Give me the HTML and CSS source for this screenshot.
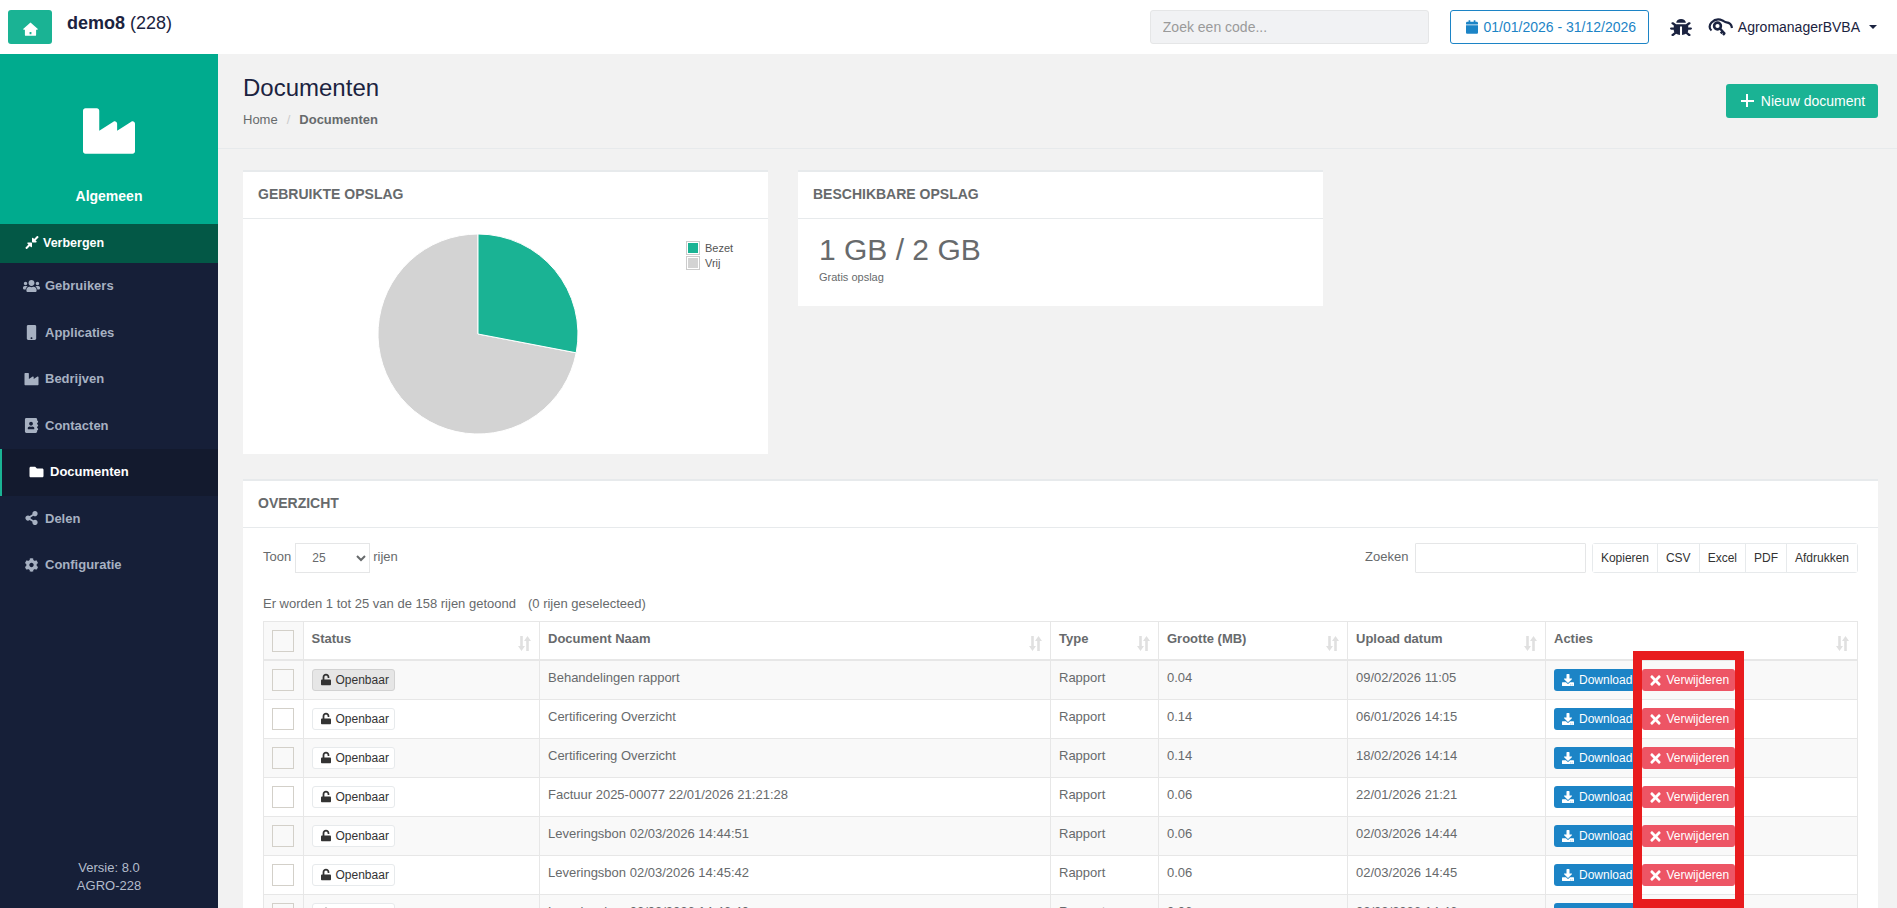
FILE: index.html
```html
<!DOCTYPE html>
<html lang="nl">

<head>
  <meta charset="UTF-8" />
  <meta name="viewport" content="width=device-width, initial-scale=1.0" />
  <title>Documenten</title>
  <link rel="stylesheet" href="styles.css">
</head>

<body>
  <!-- icon set -->
  <svg class="sprite" aria-hidden="true">
    <symbol id="i-industry" viewBox="0 0 512 512"><path d="M475.115 163.781L336 252.309v-68.28c0-18.916-20.931-30.399-36.885-20.248L160 252.309V56c0-13.255-10.745-24-24-24H24C10.745 32 0 42.745 0 56v400c0 13.255 10.745 24 24 24h464c13.255 0 24-10.745 24-24V184.029c0-18.917-20.931-30.399-36.885-20.248z"/></symbol>
    <symbol id="i-home" viewBox="0 0 16 15"><path d="M8 0.500L15.600 7.300C16 7.700 15.800 8.200 15.300 8.200H14V13.800C14 14.400 13.600 14.800 13 14.800H3C2.400 14.800 2 14.400 2 13.800V8.200H0.700C0.200 8.200 0 7.700 0.400 7.300ZM7 10.800V13H9V10.800Z" fill-rule="evenodd"/></symbol>
    <symbol id="i-compress" viewBox="0 0 448 512"><path d="M4.686 427.314L104 328l-32.922-31.029C55.958 281.851 66.666 256 88.048 256h112C213.303 256 224 266.745 224 280v112c0 21.382-25.803 32.09-40.922 16.971L152 376l-99.314 99.314c-6.248 6.248-16.379 6.248-22.627 0L4.686 449.941c-6.248-6.248-6.248-16.379 0-22.627zM443.314 84.686L344 184l32.922 31.029c15.12 15.12 4.412 40.971-16.97 40.971h-112C234.697 256 224 245.255 224 232V120c0-21.382 25.803-32.09 40.922-16.971L296 136l99.314-99.314c6.248-6.248 16.379-6.248 22.627 0l25.373 25.373c6.248 6.248 6.248 16.379 0 22.627z"/></symbol>
    <symbol id="i-users" viewBox="0 0 640 512"><path d="M96 224c35.3 0 64-28.7 64-64s-28.7-64-64-64-64 28.7-64 64 28.7 64 64 64zm448 0c35.3 0 64-28.7 64-64s-28.7-64-64-64-64 28.7-64 64 28.7 64 64 64zm32 32h-64c-17.6 0-33.5 7.1-45.1 18.6 40.3 22.1 68.9 62 75.1 109.4h66c17.7 0 32-14.3 32-32v-32c0-35.3-28.7-64-64-64zm-256 0c61.9 0 112-50.1 112-112S381.9 32 320 32 208 82.1 208 144s50.1 112 112 112zm76.8 32h-8.3c-20.8 10-43.9 16-68.5 16s-47.6-6-68.5-16h-8.3C179.6 288 128 339.6 128 403.2V432c0 26.5 21.5 48 48 48h288c26.5 0 48-21.5 48-48v-28.8c0-63.6-51.6-115.2-115.2-115.2zm-223.7-13.4C161.5 263.1 145.6 256 128 256H64c-35.3 0-64 28.7-64 64v32c0 17.7 14.3 32 32 32h65.9c6.3-47.4 34.9-87.3 75.2-109.4z"/></symbol>
    <symbol id="i-mobile" viewBox="0 0 320 512"><path d="M272 0H48C21.5 0 0 21.5 0 48v416c0 26.5 21.5 48 48 48h224c26.5 0 48-21.5 48-48V48c0-26.5-21.5-48-48-48zM160 480c-17.7 0-32-14.3-32-32s14.3-32 32-32 32 14.3 32 32-14.3 32-32 32z"/></symbol>
    <symbol id="i-book" viewBox="0 0 448 512"><path d="M436 160c6.6 0 12-5.4 12-12v-40c0-6.6-5.4-12-12-12h-20V48c0-26.5-21.5-48-48-48H48C21.5 0 0 21.5 0 48v416c0 26.5 21.5 48 48 48h320c26.5 0 48-21.5 48-48v-48h20c6.6 0 12-5.4 12-12v-40c0-6.6-5.4-12-12-12h-20v-64h20c6.6 0 12-5.4 12-12v-40c0-6.6-5.4-12-12-12h-20v-64h20zm-228-32c35.3 0 64 28.7 64 64s-28.7 64-64 64-64-28.7-64-64 28.7-64 64-64zm112 236.8c0 10.6-10 19.2-22.4 19.2H118.4C106 384 96 375.4 96 364.8v-19.2c0-31.8 30.1-57.6 67.2-57.6h5c12.3 5.1 25.7 8 39.8 8s27.6-2.9 39.8-8h5c37.1 0 67.2 25.8 67.2 57.6v19.2z"/></symbol>
    <symbol id="i-folder" viewBox="0 0 512 512"><path d="M464 128H272l-64-64H48C21.49 64 0 85.49 0 112v288c0 26.51 21.49 48 48 48h416c26.51 0 48-21.49 48-48V176c0-26.51-21.49-48-48-48z"/></symbol>
    <symbol id="i-share" viewBox="0 0 448 512"><path d="M352 320c-22.608 0-43.387 7.819-59.79 20.895l-102.486-64.054a96.551 96.551 0 0 0 0-41.683l102.486-64.054C308.613 184.181 329.392 192 352 192c53.019 0 96-42.981 96-96S405.019 0 352 0s-96 42.981-96 96c0 7.158.79 14.13 2.276 20.841L155.79 180.895C139.387 167.819 118.608 160 96 160c-53.019 0-96 42.981-96 96s42.981 96 96 96c22.608 0 43.387-7.819 59.79-20.895l102.486 64.054A96.301 96.301 0 0 0 256 416c0 53.019 42.981 96 96 96s96-42.981 96-96-42.981-96-96-96z"/></symbol>
    <symbol id="i-cog" viewBox="0 0 512 512"><path d="M487.4 315.7l-42.6-24.6c4.3-23.2 4.3-47 0-70.2l42.6-24.6c4.9-2.8 7.1-8.6 5.5-14-11.1-35.6-30-67.8-54.7-94.6-3.8-4.1-10-5.1-14.8-2.3L380.8 110c-17.9-15.4-38.5-27.3-60.8-35.1V25.8c0-5.6-3.9-10.5-9.4-11.7-36.7-8.2-74.3-7.8-109.2 0-5.5 1.2-9.4 6.1-9.4 11.7V75c-22.2 7.9-42.8 19.8-60.8 35.1L88.7 85.5c-4.9-2.8-11-1.9-14.8 2.3-24.7 26.7-43.6 58.9-54.7 94.6-1.7 5.4.6 11.2 5.5 14L67.3 221c-4.3 23.2-4.3 47 0 70.2l-42.6 24.6c-4.9 2.8-7.1 8.6-5.5 14 11.1 35.6 30 67.8 54.7 94.6 3.8 4.1 10 5.1 14.8 2.3l42.6-24.6c17.9 15.4 38.5 27.3 60.8 35.1v49.2c0 5.6 3.9 10.5 9.4 11.7 36.7 8.2 74.3 7.8 109.2 0 5.5-1.2 9.4-6.1 9.4-11.7v-49.2c22.2-7.9 42.8-19.8 60.8-35.1l42.6 24.6c4.9 2.8 11 1.9 14.8-2.3 24.7-26.7 43.6-58.9 54.7-94.6 1.5-5.5-.7-11.3-5.6-14.1zM256 336c-44.1 0-80-35.9-80-80s35.9-80 80-80 80 35.9 80 80-35.9 80-80 80z"/></symbol>
    <symbol id="i-calendar" viewBox="0 0 448 512"><path d="M12 192h424c6.6 0 12 5.4 12 12v260c0 26.5-21.5 48-48 48H48c-26.5 0-48-21.5-48-48V204c0-6.6 5.4-12 12-12zm436-44v-36c0-26.5-21.5-48-48-48h-48V12c0-6.6-5.4-12-12-12h-40c-6.6 0-12 5.4-12 12v52H160V12c0-6.6-5.4-12-12-12h-40c-6.6 0-12 5.4-12 12v52H48C21.5 64 0 85.5 0 112v36c0 6.6 5.4 12 12 12h424c6.6 0 12-5.4 12-12z"/></symbol>
    <symbol id="i-bug" viewBox="0 0 512 512" preserveAspectRatio="none"><path d="M511.988 288.9c-.478 17.43-15.217 31.1-32.653 31.1H424v16c0 21.864-4.882 42.584-13.6 61.145l60.228 60.228c12.496 12.497 12.496 32.758 0 45.255-12.498 12.497-32.759 12.496-45.256 0l-54.736-54.736C345.886 467.965 314.351 480 280 480V236c0-6.627-5.373-12-12-12h-24c-6.627 0-12 5.373-12 12v244c-34.351 0-65.886-12.035-90.636-32.108l-54.736 54.736c-12.498 12.497-32.759 12.496-45.256 0-12.496-12.497-12.496-32.758 0-45.255l60.228-60.228C92.882 378.584 88 357.864 88 336v-16H32.666C15.23 320 .491 306.33.013 288.9-.484 270.816 14.028 256 32 256h56v-58.745l-46.628-46.628c-12.496-12.497-12.496-32.758 0-45.255 12.498-12.497 32.758-12.497 45.256 0L141.255 160h229.489l54.627-54.627c12.498-12.497 32.758-12.497 45.256 0 12.496 12.497 12.496 32.758 0 45.255L424 197.255V256h56c17.972 0 32.484 14.816 31.988 32.9zM257 0c-61.856 0-112 50.144-112 112h224C369 50.144 318.856 0 257 0z"/></symbol>
    <symbol id="i-download" viewBox="0 0 512 512"><path d="M216 0h80c13.3 0 24 10.7 24 24v168h87.7c17.8 0 26.7 21.5 14.1 34.1L269.7 378.3c-7.5 7.5-19.8 7.5-27.3 0L90.1 226.1c-12.6-12.6-3.7-34.1 14.1-34.1H192V24c0-13.3 10.7-24 24-24zm296 376v112c0 13.3-10.7 24-24 24H24c-13.3 0-24-10.7-24-24V376c0-13.3 10.7-24 24-24h146.7l49 49c20.1 20.1 52.5 20.1 72.6 0l49-49H488c13.3 0 24 10.7 24 24zm-124 88c0-11-9-20-20-20s-20 9-20 20 9 20 20 20 20-9 20-20zm64 0c0-11-9-20-20-20s-20 9-20 20 9 20 20 20 20-9 20-20z"/></symbol>
    <symbol id="i-times" viewBox="0 0 352 512"><path d="M242.72 256l100.07-100.07c12.28-12.28 12.28-32.19 0-44.48l-22.24-22.24c-12.28-12.28-32.19-12.28-44.48 0L176 189.28 75.93 89.21c-12.28-12.28-32.19-12.28-44.48 0L9.21 111.45c-12.28 12.28-12.28 32.19 0 44.48L109.28 256 9.21 356.07c-12.28 12.28-12.28 32.19 0 44.48l22.24 22.24c12.28 12.28 32.2 12.28 44.48 0L176 322.72l100.07 100.07c12.28 12.28 32.2 12.28 44.48 0l22.24-22.24c12.28-12.28 12.28-32.19 0-44.48L242.72 256z"/></symbol>
    <symbol id="i-unlock" viewBox="0 0 448 512"><path d="M400 256H152V152.9c0-39.6 31.7-72.5 71.3-72.9 40-.4 72.7 32.1 72.7 72v16c0 13.3 10.7 24 24 24h32c13.3 0 24-10.7 24-24v-16C376 68 307.5-.3 223.5 0 139.5.3 72 69.5 72 153.5V256H48c-26.5 0-48 21.5-48 48v160c0 26.5 21.5 48 48 48h352c26.5 0 48-21.5 48-48V304c0-26.5-21.5-48-48-48z"/></symbol>
    <symbol id="i-sort" viewBox="0 0 13 15"><path d="M2.2 0h2.6v10H7l-3.5 5L0 10h2.2zM8.2 15h2.6V5H13L9.5 0 6 5h2.2z"/></symbol>
  </svg>

  <header class="topbar">
    <a class="home-btn"><svg class="icon"><use href="#i-home"/></svg></a>
    <div class="farm-name"><b>demo8</b> (228)</div>
    <input class="code-search" type="text" placeholder="Zoek een code...">
    <button class="date-btn"><svg class="icon"><use href="#i-calendar"/></svg>01/01/2026 - 31/12/2026</button>
    <svg class="icon bug-icon"><use href="#i-bug"/></svg>
    <svg class="key-icon" viewBox="0 0 25 18" fill="none" stroke="#1b2340">
      <path d="M3.5 12.5C1 10.500 1 7 3.500 4.500 6.500 1.500 11 .8 14.500 2.500 16 3.300 17 4.200 18.500 4.300 21.500 4.500 23.500 6.500 24 10" stroke-width="2.200"/>
      <circle cx="9.500" cy="8" r="3.400" stroke-width="2.600"/>
      <path d="M12 10.500l5 5.500M14.500 13.500l-1.800 1.800M16.500 15.500l-1.500 1.500" stroke-width="2.400"/>
    </svg>
    <div class="user-name">AgromanagerBVBA<span class="caret"></span></div>
  </header>

  <div class="layout">
    <aside class="sidebar">
      <div class="brand">
        <svg class="icon brand-icon"><use href="#i-industry"/></svg>
        <div class="brand-name">Algemeen</div>
      </div>
      <a class="hide-menu"><svg class="icon"><use href="#i-compress"/></svg>Verbergen</a>
      <ul class="side-nav">
        <li><svg class="icon"><use href="#i-users"/></svg>Gebruikers</li>
        <li><svg class="icon icon-small"><use href="#i-mobile"/></svg>Applicaties</li>
        <li><svg class="icon"><use href="#i-industry"/></svg>Bedrijven</li>
        <li><svg class="icon icon-small"><use href="#i-book"/></svg>Contacten</li>
        <li class="active"><svg class="icon"><use href="#i-folder"/></svg>Documenten</li>
        <li><svg class="icon"><use href="#i-share"/></svg>Delen</li>
        <li><svg class="icon"><use href="#i-cog"/></svg>Configuratie</li>
      </ul>
      <div class="version">Versie: 8.0<br>AGRO-228</div>
    </aside>

    <main class="content">
      <div class="page-head">
        <div>
          <h2>Documenten</h2>
          <div class="crumbs">Home<span class="crumb-sep">/</span><b>Documenten</b></div>
        </div>
        <button class="new-btn"><span class="plus"></span>Nieuw document</button>
      </div>

      <div class="card-row">
        <section class="card">
          <h5 class="card-title">GEBRUIKTE OPSLAG</h5>
          <div class="chart">
            <svg class="pie" viewBox="-101 -101 202 202">
              <path d="M0 0V-100A100 100 0 1 0 98.200 18.800Z" fill="#d3d3d3" stroke="#fff"/>
              <path d="M0 0V-100A100 100 0 0 1 98.200 18.800Z" fill="#1ab394" stroke="#fff"/>
            </svg>
            <div class="legend">
              <div class="legend-row"><span class="swatch"><i class="teal"></i></span>Bezet</div>
              <div class="legend-row"><span class="swatch"><i class="grey"></i></span>Vrij</div>
            </div>
          </div>
        </section>
        <section class="card card-small">
          <h5 class="card-title">BESCHIKBARE OPSLAG</h5>
          <div class="storage">
            <div class="storage-num">1 GB / 2 GB</div>
            <small>Gratis opslag</small>
          </div>
        </section>
      </div>

      <section class="card card-wide">
        <h5 class="card-title">OVERZICHT</h5>
        <div class="card-body">
          <div class="controls">
            <label class="length">Toon
              <select><option>25</option><option>50</option></select>
              rijen</label>
            <div class="tools">
              <label class="filter">Zoeken <input type="search"></label>
              <div class="export">
                <button>Kopieren</button><button>CSV</button><button>Excel</button><button>PDF</button><button>Afdrukken</button>
              </div>
            </div>
          </div>
          <div class="table-info">Er worden 1 tot 25 van de 158 rijen getoond<span class="selected">(0 rijen geselecteed)</span></div>

          <table class="docs">
            <colgroup>
              <col class="c-check"><col class="c-status"><col class="c-name"><col class="c-type"><col class="c-size"><col class="c-date"><col>
            </colgroup>
            <thead>
              <tr>
                <th class="check-cell"><span class="check"></span></th>
                <th><div class="th-in">Status<svg class="sort"><use href="#i-sort"/></svg></div></th>
                <th><div class="th-in">Document Naam<svg class="sort"><use href="#i-sort"/></svg></div></th>
                <th><div class="th-in">Type<svg class="sort"><use href="#i-sort"/></svg></div></th>
                <th><div class="th-in">Grootte (MB)<svg class="sort"><use href="#i-sort"/></svg></div></th>
                <th><div class="th-in">Upload datum<svg class="sort"><use href="#i-sort"/></svg></div></th>
                <th><div class="th-in">Acties<svg class="sort"><use href="#i-sort"/></svg></div></th>
              </tr>
            </thead>
            <tbody>
              <tr>
                <td class="check-cell"><span class="check"></span></td>
                <td><button class="status-btn hover"><svg class="icon"><use href="#i-unlock"/></svg>Openbaar</button></td>
                <td>Behandelingen rapport</td><td>Rapport</td><td>0.04</td><td>09/02/2026 11:05</td>
                <td><button class="act dl"><svg class="icon"><use href="#i-download"/></svg>Download</button><button class="act rm"><svg class="icon"><use href="#i-times"/></svg>Verwijderen</button></td>
              </tr>
              <tr>
                <td class="check-cell"><span class="check"></span></td>
                <td><button class="status-btn"><svg class="icon"><use href="#i-unlock"/></svg>Openbaar</button></td>
                <td>Certificering Overzicht</td><td>Rapport</td><td>0.14</td><td>06/01/2026 14:15</td>
                <td><button class="act dl"><svg class="icon"><use href="#i-download"/></svg>Download</button><button class="act rm"><svg class="icon"><use href="#i-times"/></svg>Verwijderen</button></td>
              </tr>
              <tr>
                <td class="check-cell"><span class="check"></span></td>
                <td><button class="status-btn"><svg class="icon"><use href="#i-unlock"/></svg>Openbaar</button></td>
                <td>Certificering Overzicht</td><td>Rapport</td><td>0.14</td><td>18/02/2026 14:14</td>
                <td><button class="act dl"><svg class="icon"><use href="#i-download"/></svg>Download</button><button class="act rm"><svg class="icon"><use href="#i-times"/></svg>Verwijderen</button></td>
              </tr>
              <tr>
                <td class="check-cell"><span class="check"></span></td>
                <td><button class="status-btn"><svg class="icon"><use href="#i-unlock"/></svg>Openbaar</button></td>
                <td>Factuur 2025-00077 22/01/2026 21:21:28</td><td>Rapport</td><td>0.06</td><td>22/01/2026 21:21</td>
                <td><button class="act dl"><svg class="icon"><use href="#i-download"/></svg>Download</button><button class="act rm"><svg class="icon"><use href="#i-times"/></svg>Verwijderen</button></td>
              </tr>
              <tr>
                <td class="check-cell"><span class="check"></span></td>
                <td><button class="status-btn"><svg class="icon"><use href="#i-unlock"/></svg>Openbaar</button></td>
                <td>Leveringsbon 02/03/2026 14:44:51</td><td>Rapport</td><td>0.06</td><td>02/03/2026 14:44</td>
                <td><button class="act dl"><svg class="icon"><use href="#i-download"/></svg>Download</button><button class="act rm"><svg class="icon"><use href="#i-times"/></svg>Verwijderen</button></td>
              </tr>
              <tr>
                <td class="check-cell"><span class="check"></span></td>
                <td><button class="status-btn"><svg class="icon"><use href="#i-unlock"/></svg>Openbaar</button></td>
                <td>Leveringsbon 02/03/2026 14:45:42</td><td>Rapport</td><td>0.06</td><td>02/03/2026 14:45</td>
                <td><button class="act dl"><svg class="icon"><use href="#i-download"/></svg>Download</button><button class="act rm"><svg class="icon"><use href="#i-times"/></svg>Verwijderen</button></td>
              </tr>
              <tr>
                <td class="check-cell"><span class="check"></span></td>
                <td><button class="status-btn"><svg class="icon"><use href="#i-unlock"/></svg>Openbaar</button></td>
                <td>Leveringsbon 02/03/2026 14:46:40</td><td>Rapport</td><td>0.06</td><td>02/03/2026 14:46</td>
                <td><button class="act dl"><svg class="icon"><use href="#i-download"/></svg>Download</button><button class="act rm"><svg class="icon"><use href="#i-times"/></svg>Verwijderen</button></td>
              </tr>
            </tbody>
          </table>
        </div>
      </section>
    </main>
  </div>

  <!-- red annotation over the delete buttons -->
  <div class="mark-box"></div>
</body>

</html>
```

FILE: styles.css
```css
* {
  box-sizing: border-box;
}

html,
body {
  height: 100%;
}

body {
  margin: 0;
  position: relative;
  display: flex;
  flex-direction: column;
  overflow: hidden;
  background: #f2f2f2;
  color: #676a6c;
  font-family: "Liberation Sans", Arial, sans-serif;
  font-size: 13px;
}

button,
input,
select {
  font-family: inherit;
}

.sprite {
  display: none;
}

.icon {
  fill: currentColor;
  flex: none;
}

/* top bar */
.topbar {
  height: 54px;
  flex: none;
  display: flex;
  align-items: center;
  padding: 0 20px 0 8px;
  background: #fff;
}

.home-btn {
  width: 44px;
  height: 34px;
  display: flex;
  align-items: center;
  justify-content: center;
  border-radius: 3px;
  background: #1ab394;
  color: #fff;
}

.home-btn .icon {
  width: 15px;
  height: 14px;
  margin-top: 3px;
}

.farm-name {
  margin-left: 15px;
  margin-right: auto;
  margin-top: -8px;
  color: #1b2340;
  font-size: 18px;
}

.code-search {
  width: 279px;
  height: 34px;
  padding: 0 12px;
  border: 1px solid #e5e6e7;
  border-radius: 3px;
  background: #f1f2f4;
  font-size: 14px;
}

.code-search::placeholder {
  color: #9a9a9a;
}

.date-btn {
  width: 199px;
  height: 34px;
  margin-left: 21px;
  padding: 0 0 0 3px;
  display: flex;
  align-items: center;
  justify-content: center;
  gap: 6px;
  border: 1px solid #1c84c6;
  border-radius: 3px;
  background: #fff;
  color: #1c84c6;
  font-size: 14px;
}

.date-btn .icon {
  width: 12px;
  height: 14px;
}

.bug-icon {
  width: 22px;
  height: 17px;
  margin-left: 21px;
  color: #1b2340;
}

.key-icon {
  width: 25px;
  height: 18px;
  margin-left: 16px;
}

.user-name {
  margin-left: 5px;
  color: #1b2340;
  font-size: 14px;
  display: flex;
  align-items: center;
}

.caret {
  margin-left: 9px;
  border: 4px solid transparent;
  border-top-color: #1b2340;
  border-bottom: 0;
}

/* sidebar */
.layout {
  flex: 1;
  min-height: 0;
  display: flex;
}

.sidebar {
  width: 218px;
  flex: none;
  display: flex;
  flex-direction: column;
  background: #161f38;
  color: #a7b1c2;
  font-weight: bold;
}

.brand {
  height: 170px;
  display: flex;
  flex-direction: column;
  align-items: center;
  background: #00ab8e;
  color: #fff;
}

.brand-icon {
  width: 52px;
  height: 52px;
  margin-top: 51px;
}

.brand-name {
  margin-top: 31px;
  font-size: 14px;
}

.hide-menu {
  height: 39px;
  padding: 0 0 2px 25px;
  display: flex;
  align-items: center;
  gap: 4px;
  background: #035846;
  color: #fff;
  font-size: 12.5px;
}

.hide-menu .icon {
  width: 14px;
  height: 15px;
}

.side-nav {
  margin: 0;
  padding: 0;
  list-style: none;
}

.side-nav li {
  height: 46.5px;
  padding: 0 0 1px 23px;
  display: flex;
  align-items: center;
}

.side-nav .icon {
  width: 17px;
  height: 14px;
  margin-right: 5px;
}

.side-nav .icon-small {
  height: 15px;
}

.side-nav li.active {
  padding-left: 26px;
  border-left: 2px solid #1ab394;
  background: #131a2e;
  color: #fff;
}

.side-nav li.active .icon {
  margin-right: 5px;
}

.version {
  margin-top: auto;
  padding-bottom: 13px;
  text-align: center;
  font-weight: normal;
  line-height: 18px;
  color: #b3bccb;
}

/* page head */
.content {
  flex: 1;
  min-width: 0;
}

.page-head {
  height: 95px;
  padding: 0 19px 0 25px;
  display: flex;
  align-items: center;
  justify-content: space-between;
  border-bottom: 1px solid #e7eaec;
}

.page-head h2 {
  margin: 0;
  color: #1b2340;
  font-size: 24px;
  font-weight: normal;
  line-height: 28px;
}

.crumbs {
  margin-top: 9px;
  line-height: 18px;
}

.crumb-sep {
  margin: 0 9px;
  color: #ccc;
}

.new-btn {
  height: 34px;
  width: 152px;
  padding: 0 0 1px 2px;
  display: flex;
  align-items: center;
  justify-content: center;
  gap: 7px;
  border: 0;
  border-radius: 3px;
  background: #1ab394;
  color: #fff;
  font-size: 14px;
}

.plus {
  width: 13px;
  height: 13px;
  background:
    linear-gradient(#fff, #fff) center / 100% 2px no-repeat,
    linear-gradient(#fff, #fff) center / 2px 100% no-repeat;
}

/* cards */
.card-row {
  margin: 21px 19px 0 25px;
  display: flex;
  align-items: flex-start;
  gap: 30px;
}

.card {
  width: 525px;
  background: #fff;
  border-top: 2px solid #e7eaec;
}

.card-wide {
  width: auto;
  margin: 25px 19px 0 25px;
}

.card-title {
  height: 47px;
  margin: 0;
  padding: 0 15px 2px;
  display: flex;
  align-items: center;
  border-bottom: 1px solid #e7eaec;
  font-size: 14px;
  font-weight: bold;
}

.chart {
  position: relative;
  height: 235px;
  padding: 14px 0 0 133.5px;
}

.pie {
  width: 202px;
  height: 202px;
  display: block;
}

.legend {
  position: absolute;
  top: 21px;
  left: 443px;
  color: #545454;
  font-size: 11px;
}

.legend-row {
  height: 15px;
  display: flex;
  align-items: center;
  gap: 5px;
}

.swatch {
  width: 14px;
  height: 14px;
  padding: 1px;
  border: 1px solid #ccc;
}

.swatch i {
  display: block;
  height: 100%;
}

.swatch .teal {
  background: #1ab394;
}

.swatch .grey {
  background: #d3d3d3;
}

.card-small {
  height: 136px;
}

.storage {
  padding: 13px 0 0 21px;
}

.storage-num {
  font-size: 30px;
  line-height: 36px;
}

.storage small {
  display: block;
  font-size: 11px;
  line-height: 16px;
  margin-top: 1px;
}

/* table controls */
.card-body {
  padding: 15px 20px 0;
}

.controls {
  height: 30px;
  display: flex;
  justify-content: space-between;
}

.length,
.filter {
  display: flex;
  align-items: center;
}

.length {
  align-items: flex-start;
  gap: 3px;
  line-height: 27px;
}

.length select {
  width: 75px;
  height: 30px;
  margin: 0 0 0 1px;
  padding-left: 12px;
  border: 1px solid #e5e6e7;
  background: #fff;
  color: #676a6c;
  font-size: 12px;
}

.tools {
  display: flex;
  gap: 5.5px;
}

.filter {
  gap: 7px;
  padding-bottom: 3px;
}

.filter input {
  width: 171px;
  height: 30px;
  margin-bottom: -3px;
  border: 1px solid #e5e6e7;
  border-radius: 1px;
}

.export {
  display: flex;
  border: 1px solid #e7eaec;
  border-radius: 3px;
}

.export button {
  padding: 0 8px;
  border: 0;
  border-left: 1px solid #e7eaec;
  background: #fff;
  color: #333;
  font-size: 12px;
}

.export button:first-child {
  border-left: 0;
}

.table-info {
  height: 48px;
  padding-top: 22px;
  line-height: 18px;
}

.selected {
  margin-left: 12px;
}

/* table */
.docs {
  width: 1595px;
  table-layout: fixed;
  border-collapse: collapse;
}

.c-check {
  width: 39.5px;
}

.c-status {
  width: 236.5px;
}

.c-name {
  width: 511px;
}

.c-type {
  width: 108px;
}

.c-size {
  width: 189px;
}

.c-date {
  width: 198px;
}

.docs th,
.docs td {
  height: 39px;
  padding: 8px;
  border: 1px solid #e7e7e7;
  vertical-align: top;
  text-align: left;
  line-height: 18px;
}

.docs th {
  height: 38px;
  border-bottom-width: 2px;
}

.th-in {
  display: flex;
  justify-content: space-between;
}

.sort {
  width: 13px;
  height: 15px;
  margin-top: 6px;
  fill: #e0e0e0;
}

.docs tbody tr:nth-child(odd) {
  background: #f9f9f9;
}

.docs th.check-cell {
  background: #f9f9f9;
}

.docs .check-cell {
  padding: 8px 0 0 8px;
}

.check {
  width: 22px;
  height: 22px;
  display: block;
  border: 1px solid #d3d0c9;
}

.docs td:nth-child(2),
.docs td:last-child {
  padding-top: 0;
}

.status-btn {
  height: 22px;
  width: 83px;
  padding: 0 0 0 8px;
  margin-top: 8px;
  display: flex;
  align-items: center;
  gap: 5px;
  border: 1px solid #e7eaec;
  border-radius: 3px;
  background: #fff;
  color: #333;
  font-size: 12px;
}

.status-btn .icon {
  width: 10px;
  height: 13px;
  margin-top: -1px;
}

.status-btn.hover {
  background: #e6e6e6;
  border-color: #d2d2d2;
}

.act {
  height: 22px;
  margin-top: 8px;
  margin-right: 2px;
  padding: 0 8px;
  display: inline-flex;
  align-items: center;
  gap: 5px;
  border: 0;
  border-radius: 3px;
  color: #fff;
  font-size: 12px;
  vertical-align: top;
}

.act .icon {
  width: 12px;
  height: 12px;
}

.dl {
  background: #1c84c6;
}

.rm {
  width: 93px;
  background: #ed5565;
}

.rm .icon {
  width: 11px;
  height: 15px;
}

/* annotation drawn on top of the screenshot */
.mark-box {
  position: absolute;
  left: 1633px;
  top: 651px;
  width: 111px;
  height: 257px;
  border: 9px solid #e81c1e;
}
```
